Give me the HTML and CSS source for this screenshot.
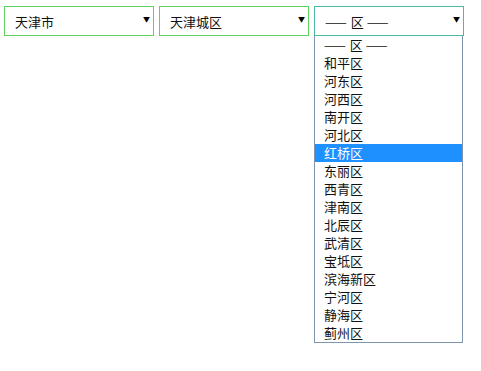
FILE: index.html
```html
<!DOCTYPE html>
<html>
<head>
    <meta charset="utf-8">
    <title>地区选择</title>
    <link rel="stylesheet" href="styles.css">
</head>
<body>
    <div class="picker">
        <div class="select">
            <span class="select-text">天津市</span>
            <span class="arrow">▼</span>
        </div>
        <div class="select">
            <span class="select-text">天津城区</span>
            <span class="arrow">▼</span>
        </div>
        <div class="select-wrap">
            <div class="select select-open">
                <span class="select-text"><span class="dash">——</span> 区 <span class="dash">——</span></span>
                <span class="arrow">▼</span>
            </div>
            <ul class="dropdown">
                <li><span class="dash">——</span> 区 <span class="dash">——</span></li>
                <li>和平区</li>
                <li>河东区</li>
                <li>河西区</li>
                <li>南开区</li>
                <li>河北区</li>
                <li class="active">红桥区</li>
                <li>东丽区</li>
                <li>西青区</li>
                <li>津南区</li>
                <li>北辰区</li>
                <li>武清区</li>
                <li>宝坻区</li>
                <li>滨海新区</li>
                <li>宁河区</li>
                <li>静海区</li>
                <li>蓟州区</li>
            </ul>
        </div>
    </div>
</body>
</html>
```

FILE: styles.css
```css
body {
    margin: 0;
    padding: 6px 0 0 4px;
    background-color: #fff;
    font-family: "Noto Sans CJK SC", "Noto Sans", sans-serif;
    font-size: 13px;
    color: #111;
}

.picker {
    display: flex;
    align-items: flex-start;
    gap: 5px;
}

.select-wrap {
    display: flex;
    flex-direction: column;
}

.select {
    width: 150px;
    height: 30px;
    box-sizing: border-box;
    border: 1px solid #5fd35f;
    display: flex;
    align-items: center;
    justify-content: space-between;
    padding: 0 3px 0 10px;
    background-color: #fff;
}

.select-open {
    border-color: #4fb8a3;
}

.arrow {
    font-size: 7px;
    color: #000;
    margin-top: -4px;
}

.dash {
    letter-spacing: 1px;
}

.dropdown {
    width: 149px;
    box-sizing: border-box;
    margin: 0;
    padding: 0;
    list-style: none;
    border: 1px solid #7f94ad;
    border-top: none;
    background-color: #fff;
}

.dropdown li {
    height: 18px;
    line-height: 18px;
    padding-left: 9px;
    white-space: nowrap;
}

.dropdown li.active {
    background-color: #1e90ff;
    color: #fff;
}
```
